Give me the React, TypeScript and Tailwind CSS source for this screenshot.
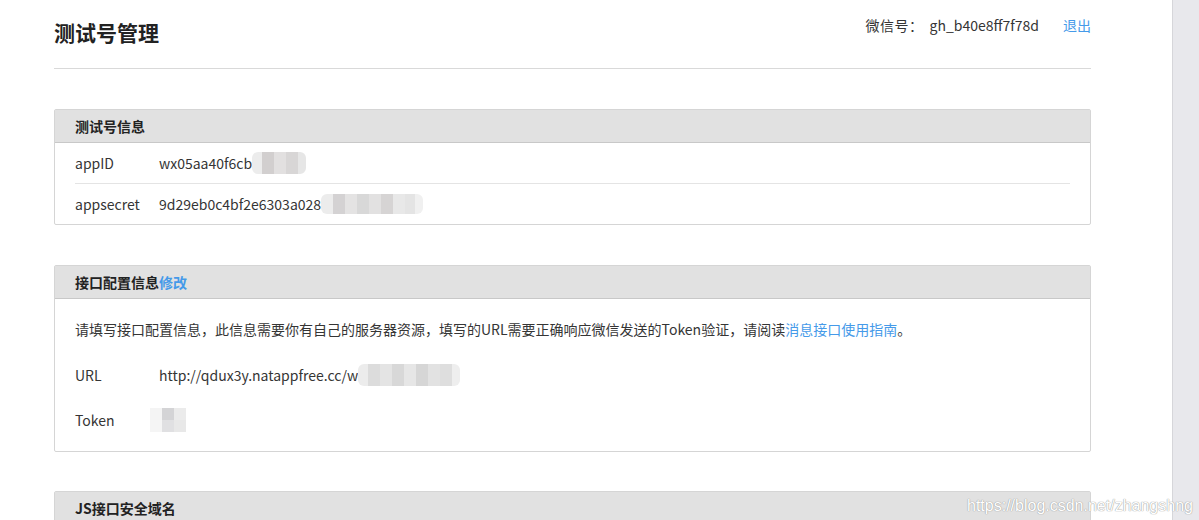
import React from "react";

const font = { fontFamily: '"Noto Sans CJK SC", "Noto Sans", sans-serif' };

function Blur({ cells, h }: { cells: { w: number; c: string }[]; h: number }) {
  return (
    <span className="inline-flex align-middle rounded-[6px] overflow-hidden" style={{ height: h }}>
      {cells.map((c, i) => (
        <span key={i} style={{ width: c.w, background: c.c, height: h }} />
      ))}
    </span>
  );
}

export default function App() {
  return (
    <div className="relative flex w-[1199px] h-[520px] overflow-hidden bg-white text-[#353535]" style={font}>
      <div className="flex-1">
        <div className="ml-[54px] w-[1037px]">
          <div className="flex items-center justify-between h-[69px] border-b border-[#d9d9d9]">
            <h1 className="text-[21px] font-bold text-[#222] leading-none mt-[-3px]">测试号管理</h1>
            <div className="flex items-center text-[14px] mt-[-17px]">
              <span className="tracking-[0.5px]">微信号：</span>
              <span className="ml-[6px]">gh_b40e8ff7f78d</span>
              <a className="ml-[24px] text-[#459ae9]">退出</a>
            </div>
          </div>

          <div className="mt-[40px] border border-[#d5d5d5] rounded-[2px]">
            <div className="h-[33px] bg-[#e1e1e1] border-b border-[#c8c8c8] flex items-center px-[20px] text-[14px] font-bold text-[#222]">
              测试号信息
            </div>
            <div className="px-[20px]">
              <div className="h-[41px] flex items-center text-[14px] border-b border-[#e4e4e4]">
                <span className="w-[84px]">appID</span>
                <span>wx05aa40f6cb</span>
                <Blur
                  h={22}
                  cells={[
                    { w: 10, c: "#ececec" },
                    { w: 12, c: "#d2cfcf" },
                    { w: 12, c: "#e2e0e0" },
                    { w: 12, c: "#d8d6d6" },
                    { w: 8, c: "#e6e6e6" },
                  ]}
                />
              </div>
              <div className="h-[40px] flex items-center text-[14px]">
                <span className="w-[84px]">appsecret</span>
                <span>9d29eb0c4bf2e6303a028</span>
                <Blur
                  h={20}
                  cells={[
                    { w: 12, c: "#ececec" },
                    { w: 12, c: "#d4d2d3" },
                    { w: 12, c: "#e4e3e3" },
                    { w: 12, c: "#d8d8d8" },
                    { w: 12, c: "#e2e1e1" },
                    { w: 12, c: "#d6d4d4" },
                    { w: 12, c: "#e8e8e8" },
                    { w: 10, c: "#e4e4e4" },
                    { w: 8, c: "#f0f0f0" },
                  ]}
                />
              </div>
            </div>
          </div>

          <div className="mt-[40px] border border-[#d5d5d5] rounded-[2px]">
            <div className="h-[33px] bg-[#e1e1e1] border-b border-[#c8c8c8] flex items-center px-[20px] text-[14px] font-bold text-[#222]">
              接口配置信息<a className="text-[#459ae9]">修改</a>
            </div>
            <div className="px-[20px] pt-[19px] pb-[20px] text-[14px]">
              <p className="h-[22px] leading-[22px]">
                请填写接口配置信息，此信息需要你有自己的服务器资源，填写的URL需要正确响应微信发送的Token验证，请阅读
                <a className="text-[#459ae9]">消息接口使用指南</a>。
              </p>
              <div className="mt-[24px] h-[22px] flex items-center">
                <span className="w-[84px]">URL</span>
                <span>http://qdux3y.natappfree.cc/w</span>
                <Blur
                  h={22}
                  cells={[
                    { w: 10, c: "#ececec" },
                    { w: 12, c: "#dcdcdc" },
                    { w: 12, c: "#e4e4e4" },
                    { w: 12, c: "#d8d8d8" },
                    { w: 12, c: "#e6e6e6" },
                    { w: 12, c: "#d6d6d6" },
                    { w: 12, c: "#e2e2e2" },
                    { w: 12, c: "#dedede" },
                    { w: 8, c: "#eeeeee" },
                  ]}
                />
              </div>
              <div className="mt-[23px] h-[22px] flex items-center">
                <span className="w-[75px]">Token</span>
                <span className="inline-grid grid-cols-3 grid-rows-2 w-[36px] h-[24px]">
                  <span className="bg-[#f4f4f4]" />
                  <span className="bg-[#d4d4d6]" />
                  <span className="bg-[#ebebeb]" />
                  <span className="bg-[#f5f5f5]" />
                  <span className="bg-[#e0e0e2]" />
                  <span className="bg-[#e8e8e8]" />
                </span>
              </div>
            </div>
          </div>

          <div className="mt-[39px] border border-[#d5d5d5] rounded-[2px]">
            <div className="h-[33px] bg-[#e1e1e1] border-b border-[#c8c8c8] flex items-center px-[20px] text-[14px] font-bold text-[#222]">
              JS接口安全域名
            </div>
            <div className="h-[60px]" />
          </div>
        </div>
      </div>
      <div className="w-[27px] bg-[#e8e8ec] border-l border-[#d6d6da]" />

      <div
        className="absolute left-[967px] top-[494px] text-[16px] text-white whitespace-nowrap"
        style={{ fontFamily: '"Liberation Sans", sans-serif', textShadow: "0 0 1px #9a9a9a, 0 0 1px #9a9a9a" }}
      >
        https://blog.csdn.net/zhangshng
      </div>
    </div>
  );
}
